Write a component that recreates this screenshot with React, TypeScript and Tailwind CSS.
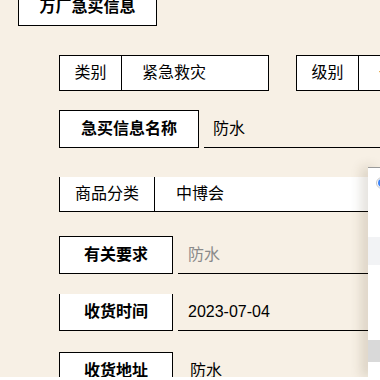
export default function App() {
  const font = "font-['Liberation_Sans','Noto_Sans_CJK_SC',sans-serif]";
  return (
    <div className={`w-[380px] h-[380px] bg-white overflow-hidden ${font} text-black`}>
      <div className="relative h-[377px] bg-[#f7f0e5] overflow-hidden">
        {/* Title */}
        <div className="ml-[18px] -mt-[12px] w-[139px] h-[38px] border border-black bg-white flex items-center justify-center text-[16px] font-bold whitespace-nowrap">
          万厂急买信息
        </div>

        {/* 类别 / 级别 */}
        <div className="mt-[29px] ml-[59px] flex gap-[27px] whitespace-nowrap">
          <div className="flex h-[36px] w-[210px] shrink-0 border border-black bg-white text-[16px]">
            <div className="w-[62px] flex items-center justify-center border-r border-black">类别</div>
            <div className="flex-1 flex items-center pl-[20px]">紧急救灾</div>
          </div>
          <div className="flex h-[36px] w-[200px] shrink-0 border border-black bg-white text-[16px]">
            <div className="w-[62px] flex items-center justify-center border-r border-black">级别</div>
            <div className="flex-1 flex items-center pl-[20px]">一级</div>
          </div>
        </div>

        {/* 急买信息名称 */}
        <div className="mt-[19px] ml-[59px] flex h-[38px]">
          <div className="w-[140px] border border-black bg-white flex items-center justify-center text-[16px] font-bold">
            急买信息名称
          </div>
          <div className="flex-1 ml-[5px] border-b border-black flex items-center pl-[9px] text-[16px]">防水</div>
        </div>

        {/* 商品分类 */}
        <div className="mt-[29px] ml-[59px] flex h-[35px] border-l border-b border-black bg-white text-[16px]">
          <div className="w-[95px] flex items-center justify-center border-r border-black">商品分类</div>
          <div className="flex-1 flex items-center pl-[21px]">中博会</div>
        </div>

        {/* 有关要求 */}
        <div className="mt-[24px] ml-[59px] flex h-[38px]">
          <div className="w-[114px] border border-black bg-white flex items-center justify-center text-[16px] font-bold">
            有关要求
          </div>
          <div className="flex-1 ml-[5px] border-b border-black flex items-center pl-[10px] text-[16px] text-[#8a8a8a]">防水</div>
        </div>

        {/* 收货时间 */}
        <div className="mt-[20px] ml-[59px] flex h-[37px]">
          <div className="w-[114px] border-x border-b border-black bg-white flex items-center justify-center text-[16px] font-bold">
            收货时间
          </div>
          <div className="flex-1 ml-[5px] border-b border-black flex items-center pl-[10px] text-[16px]">2023-07-04</div>
        </div>

        {/* 收货地址 */}
        <div className="mt-[21px] ml-[59px] flex h-[38px]">
          <div className="w-[114px] border border-black bg-white flex items-center justify-center text-[16px] font-bold">
            收货地址
          </div>
          <div className="flex-1 ml-[5px] border-b border-black flex items-center pl-[12px] text-[16px]">防水</div>
        </div>

        {/* Side panel overlay */}
        <div className="absolute left-[368px] top-[167px] right-0 bottom-0 bg-white border-t border-[#9a9a9a] shadow-[-6px_0_12px_rgba(80,60,30,0.18)]">
          <div className="absolute left-[8px] top-[9px] w-[12px] h-[12px] rounded-full border border-[#c8c8c8] bg-white flex items-center justify-center">
            <div className="w-[8px] h-[8px] rounded-full bg-[#3b82f6]" />
          </div>
          <div className="absolute left-0 right-0 top-[69px] h-[28px] bg-[#f2f3f5]" />
          <div className="absolute left-0 right-0 top-[172px] h-[22px] bg-[#d9d9d9]" />
        </div>
      </div>
    </div>
  );
}
